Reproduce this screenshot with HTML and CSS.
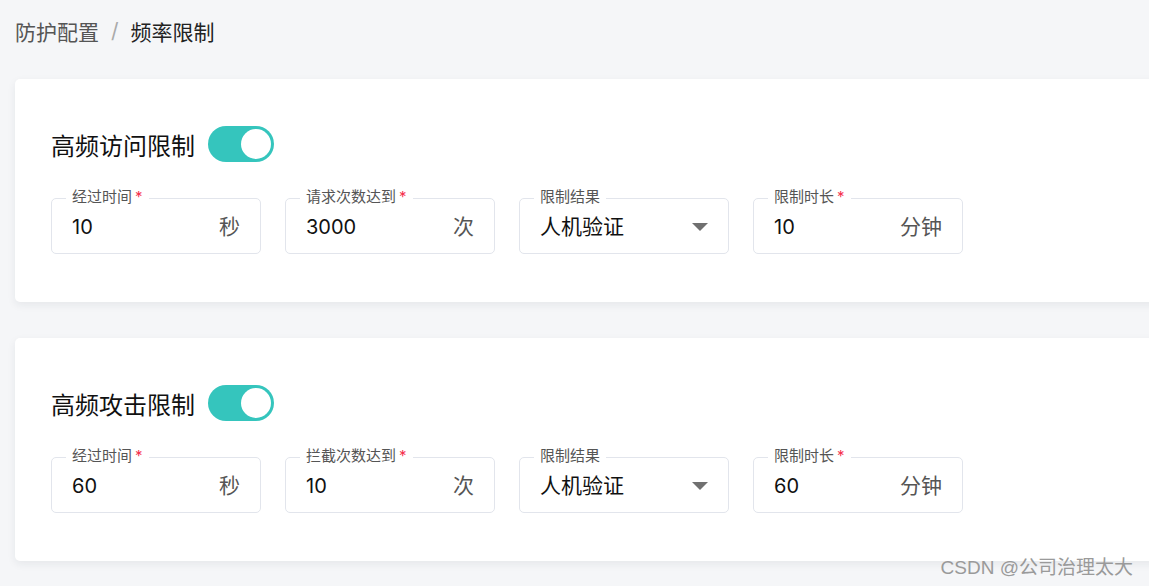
FILE: index.html
```html
<!DOCTYPE html>
<html lang="zh">
<head>
<meta charset="utf-8">
<link rel="stylesheet" href="styles.css">
</head>
<body>
<div class="page">
  <div class="breadcrumb">
    <span class="crumb-parent">防护配置</span>
    <span class="crumb-sep">/</span>
    <span class="crumb-current">频率限制</span>
  </div>

  <section class="card">
    <div class="card-head">
      <h2 class="card-title">高频访问限制</h2>
      <span class="switch"><span class="knob"></span></span>
    </div>
    <div class="fields">
      <div class="field">
        <span class="field-label">经过时间<em>*</em></span>
        <div class="field-row"><span class="field-value">10</span><span class="field-suffix">秒</span></div>
      </div>
      <div class="field">
        <span class="field-label">请求次数达到<em>*</em></span>
        <div class="field-row"><span class="field-value">3000</span><span class="field-suffix">次</span></div>
      </div>
      <div class="field">
        <span class="field-label">限制结果</span>
        <div class="field-row"><span class="field-value cjk">人机验证</span><span class="caret"></span></div>
      </div>
      <div class="field">
        <span class="field-label">限制时长<em>*</em></span>
        <div class="field-row"><span class="field-value">10</span><span class="field-suffix">分钟</span></div>
      </div>
    </div>
  </section>

  <section class="card">
    <div class="card-head">
      <h2 class="card-title">高频攻击限制</h2>
      <span class="switch"><span class="knob"></span></span>
    </div>
    <div class="fields">
      <div class="field">
        <span class="field-label">经过时间<em>*</em></span>
        <div class="field-row"><span class="field-value">60</span><span class="field-suffix">秒</span></div>
      </div>
      <div class="field">
        <span class="field-label">拦截次数达到<em>*</em></span>
        <div class="field-row"><span class="field-value">10</span><span class="field-suffix">次</span></div>
      </div>
      <div class="field">
        <span class="field-label">限制结果</span>
        <div class="field-row"><span class="field-value cjk">人机验证</span><span class="caret"></span></div>
      </div>
      <div class="field">
        <span class="field-label">限制时长<em>*</em></span>
        <div class="field-row"><span class="field-value">60</span><span class="field-suffix">分钟</span></div>
      </div>
    </div>
  </section>
</div>
<div class="watermark">CSDN @公司治理太大</div>
</body>
</html>
```

FILE: styles.css
```css
html, body {
  margin: 0;
  padding: 0;
  background: #f5f6f8;
  overflow: hidden;
  height: 586px;
}
body {
  font-family: Inter, "Noto Sans CJK SC", sans-serif;
  color: #1f1f1f;
  position: relative;
}
.page {
  padding: 0 0 0 15px;
}
.breadcrumb {
  height: 64px;
  display: flex;
  align-items: center;
  font-size: 21px;
  margin-bottom: 15px;
  padding-bottom: 3px;
  box-sizing: border-box;
}
.crumb-parent { color: #555; }
.crumb-sep { color: #aaa; margin: 0 12px; }
.crumb-current { color: #222; }

.card {
  background: #fff;
  border-radius: 5px;
  margin-right: -20px;
  padding: 47px 36px 48px;
  box-shadow: 0 3px 8px rgba(30, 40, 60, 0.07);
  margin-bottom: 36px;
}
.card-head {
  display: flex;
  align-items: center;
  height: 36px;
  margin-bottom: 36px;
}
.card-title {
  margin: 0 13px 0 0;
  font-size: 24px;
  font-weight: 400;
  color: #111;
}
.switch {
  width: 66px;
  height: 36px;
  border-radius: 18px;
  background: #35c5bd;
  display: flex;
  align-items: center;
  justify-content: flex-end;
  padding: 0 3px;
  box-sizing: border-box;
}
.knob {
  width: 30px;
  height: 30px;
  border-radius: 50%;
  background: #fff;
}
.fields {
  display: flex;
  gap: 24px;
}
.field {
  position: relative;
  width: 210px;
  height: 56px;
  box-sizing: border-box;
  border: 1px solid #e2e5ec;
  border-radius: 5px;
  display: flex;
  align-items: center;
  padding: 2px 20px 0 20px;
}
.field-row {
  flex: 1;
  display: flex;
  align-items: baseline;
  line-height: 28px;
}
.field-label {
  position: absolute;
  left: 14px;
  top: -12px;
  background: #fff;
  padding: 0 6px;
  font-size: 15px;
  line-height: 20px;
  color: #555;
}
.field-label em {
  font-style: normal;
  color: #f5314d;
  margin-left: 3px;
}
.field-value {
  flex: 1;
  font-size: 20px;
  color: #111;
}
.field-value.cjk {
  font-size: 21px;
}
.field-suffix {
  font-size: 21px;
  color: #555;
}
.caret {
  width: 0;
  height: 0;
  border-left: 8px solid transparent;
  border-right: 8px solid transparent;
  border-top: 8px solid #707070;
  align-self: center;
}
.watermark {
  position: absolute;
  right: 16px;
  top: 552px;
  font-family: "Liberation Sans", "Noto Sans CJK SC", sans-serif;
  font-size: 19px;
  color: #9a9a9a;
}
```
